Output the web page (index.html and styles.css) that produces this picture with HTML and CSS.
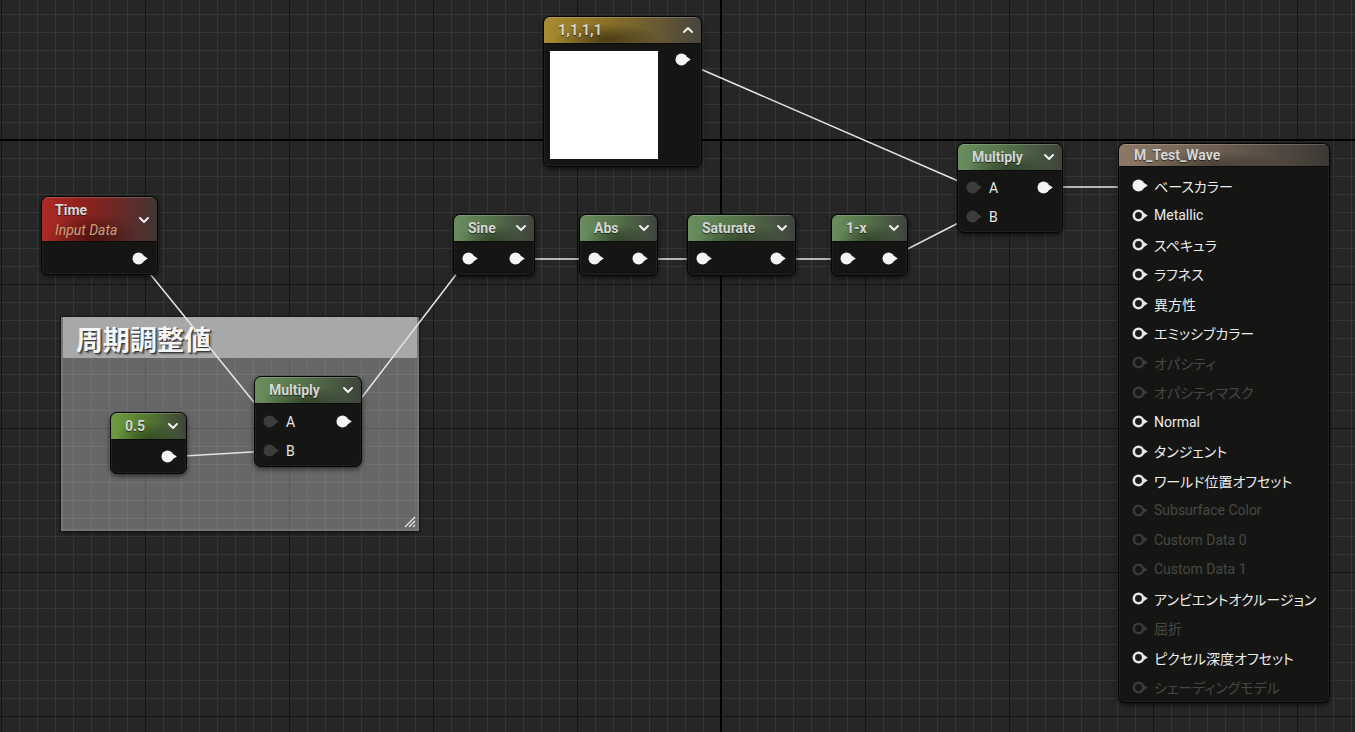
FILE: index.html
```html
<!DOCTYPE html>
<html lang="ja">
<head>
<meta charset="utf-8">
<title>M_Test_Wave</title>
<link rel="stylesheet" href="styles.css">
</head>
<body>
<svg class="defs" aria-hidden="true">
  <symbol id="pf" viewBox="0 0 17 13"><circle cx="6.5" cy="6.5" r="6" fill="#f4f4f4"/><path d="M11.8 3.8 L15.8 6.5 L11.8 9.2Z" fill="#f4f4f4"/></symbol>
  <symbol id="pr" viewBox="0 0 17 13"><circle cx="6.5" cy="6.5" r="4.7" fill="#1b1c1a" stroke="#e6e6e6" stroke-width="2.6"/><path d="M12 4 L15.8 6.5 L12 9Z" fill="#e6e6e6"/></symbol>
  <symbol id="pd" viewBox="0 0 17 13"><circle cx="6.5" cy="6.5" r="4.7" fill="#161715" stroke="#3a3b39" stroke-width="2.6"/><path d="M12 4 L15.8 6.5 L12 9Z" fill="#3a3b39"/></symbol>
  <symbol id="pg" viewBox="0 0 17 13"><circle cx="6.5" cy="6.5" r="6" fill="#3c3d3b"/><path d="M11.8 3.8 L15.8 6.5 L11.8 9.2Z" fill="#3c3d3b"/></symbol>
  <symbol id="cd" viewBox="0 0 10 6"><path d="M1 1 L5 5 L9 1" stroke="#f2f2f2" stroke-width="1.9" fill="none" stroke-linecap="round" stroke-linejoin="round"/></symbol>
  <symbol id="cu" viewBox="0 0 10 6"><path d="M1 5 L5 1 L9 5" stroke="#f2f2f2" stroke-width="1.9" fill="none" stroke-linecap="round" stroke-linejoin="round"/></symbol>
</svg>

<div class="canvas">
  <div class="comment">
    <div class="comment-title">周期調整値</div>
    <svg class="grip" viewBox="0 0 14 14"><path d="M13 3 L3 13 M13 7 L7 13 M13 11 L11 13" stroke="#e8e8e8" stroke-width="1.2"/></svg>
  </div>

  <svg class="wires" viewBox="0 0 1355 732">
    <g stroke="#e4e4e4" stroke-width="1.5" fill="none" stroke-linecap="round">
      <path d="M682 61 L972 187"/>
      <path d="M1044 187 L1138 187"/>
      <path d="M138 259 L270 422"/>
      <path d="M167 457 L270 451"/>
      <path d="M343 422 L468 259"/>
      <path d="M515 259 L594 259"/>
      <path d="M638 259 L703 259"/>
      <path d="M777 259 L847 259"/>
      <path d="M888 259 L972 216"/>
    </g>
  </svg>

  <div class="node n-color">
    <div class="hdr gold"><span class="ttl big">1,1,1,1</span><svg class="chev"><use href="#cu"/></svg></div>
    <div class="body color-body">
      <div class="swatch"></div>
      <svg class="pin pin-swatch"><use href="#pf"/></svg>
    </div>
  </div>

  <div class="node n-time">
    <div class="hdr red tall">
      <div class="ttl-stack"><span class="ttl">Time</span><span class="sub">Input Data</span></div>
      <svg class="chev"><use href="#cd"/></svg>
    </div>
    <div class="body"><div class="row"><svg class="pin out"><use href="#pf"/></svg></div></div>
  </div>

  <div class="node n-sine">
    <div class="hdr green"><span class="ttl">Sine</span><svg class="chev"><use href="#cd"/></svg></div>
    <div class="body"><div class="row"><svg class="pin"><use href="#pf"/></svg><svg class="pin out"><use href="#pf"/></svg></div></div>
  </div>

  <div class="node n-abs">
    <div class="hdr green"><span class="ttl">Abs</span><svg class="chev"><use href="#cd"/></svg></div>
    <div class="body"><div class="row"><svg class="pin"><use href="#pf"/></svg><svg class="pin out"><use href="#pf"/></svg></div></div>
  </div>

  <div class="node n-sat">
    <div class="hdr green"><span class="ttl">Saturate</span><svg class="chev"><use href="#cd"/></svg></div>
    <div class="body"><div class="row"><svg class="pin"><use href="#pf"/></svg><svg class="pin out"><use href="#pf"/></svg></div></div>
  </div>

  <div class="node n-1x">
    <div class="hdr green"><span class="ttl">1-x</span><svg class="chev"><use href="#cd"/></svg></div>
    <div class="body"><div class="row"><svg class="pin"><use href="#pf"/></svg><svg class="pin out"><use href="#pf"/></svg></div></div>
  </div>

  <div class="node n-mul1">
    <div class="hdr green"><span class="ttl">Multiply</span><svg class="chev"><use href="#cd"/></svg></div>
    <div class="body multi">
      <div class="row r29"><svg class="pin"><use href="#pg"/></svg><span class="lbl">A</span><svg class="pin out"><use href="#pf"/></svg></div>
      <div class="row r29"><svg class="pin"><use href="#pg"/></svg><span class="lbl">B</span></div>
    </div>
  </div>

  <div class="node n-mul2">
    <div class="hdr green"><span class="ttl">Multiply</span><svg class="chev"><use href="#cd"/></svg></div>
    <div class="body multi m2">
      <div class="row r29"><svg class="pin"><use href="#pg"/></svg><span class="lbl">A</span><svg class="pin out"><use href="#pf"/></svg></div>
      <div class="row r29"><svg class="pin"><use href="#pg"/></svg><span class="lbl">B</span></div>
    </div>
  </div>

  <div class="node n-half">
    <div class="hdr lime"><span class="ttl">0.5</span><svg class="chev"><use href="#cd"/></svg></div>
    <div class="body"><div class="row"><svg class="pin out"><use href="#pf"/></svg></div></div>
  </div>

  <div class="node n-res">
    <div class="hdr tan short"><span class="ttl">M_Test_Wave</span></div>
    <div class="body res-body">
      <div class="rrow"><svg class="pin"><use href="#pf"/></svg><span class="rl">ベースカラー</span></div>
      <div class="rrow"><svg class="pin"><use href="#pr"/></svg><span class="rl">Metallic</span></div>
      <div class="rrow"><svg class="pin"><use href="#pr"/></svg><span class="rl">スペキュラ</span></div>
      <div class="rrow"><svg class="pin"><use href="#pr"/></svg><span class="rl">ラフネス</span></div>
      <div class="rrow"><svg class="pin"><use href="#pr"/></svg><span class="rl">異方性</span></div>
      <div class="rrow"><svg class="pin"><use href="#pr"/></svg><span class="rl">エミッシブカラー</span></div>
      <div class="rrow off"><svg class="pin"><use href="#pd"/></svg><span class="rl">オパシティ</span></div>
      <div class="rrow off"><svg class="pin"><use href="#pd"/></svg><span class="rl">オパシティマスク</span></div>
      <div class="rrow"><svg class="pin"><use href="#pr"/></svg><span class="rl">Normal</span></div>
      <div class="rrow"><svg class="pin"><use href="#pr"/></svg><span class="rl">タンジェント</span></div>
      <div class="rrow"><svg class="pin"><use href="#pr"/></svg><span class="rl">ワールド位置オフセット</span></div>
      <div class="rrow off"><svg class="pin"><use href="#pd"/></svg><span class="rl">Subsurface Color</span></div>
      <div class="rrow off"><svg class="pin"><use href="#pd"/></svg><span class="rl">Custom Data 0</span></div>
      <div class="rrow off"><svg class="pin"><use href="#pd"/></svg><span class="rl">Custom Data 1</span></div>
      <div class="rrow"><svg class="pin"><use href="#pr"/></svg><span class="rl">アンビエントオクルージョン</span></div>
      <div class="rrow off"><svg class="pin"><use href="#pd"/></svg><span class="rl">屈折</span></div>
      <div class="rrow"><svg class="pin"><use href="#pr"/></svg><span class="rl">ピクセル深度オフセット</span></div>
      <div class="rrow off"><svg class="pin"><use href="#pd"/></svg><span class="rl">シェーディングモデル</span></div>
    </div>
  </div>
</div>
</body>
</html>
```

FILE: styles.css
```css
* { box-sizing: border-box; }

html, body {
  margin: 0;
  padding: 0;
  background: #262626;
  overflow: hidden;
}

.defs { position: absolute; width: 0; height: 0; overflow: hidden; }

.canvas {
  position: relative;
  width: 1355px;
  height: 732px;
  overflow: hidden;
  font-family: Roboto, "Noto Sans CJK JP", sans-serif;
  background-color: #262626;
  background-image:
    linear-gradient(90deg, transparent 720px, #000 720px, #000 722px, transparent 722px),
    linear-gradient(180deg, transparent 139px, #000 139px, #000 141px, transparent 141px),
    linear-gradient(90deg, #141414 1px, transparent 1px),
    linear-gradient(180deg, #141414 1px, transparent 1px),
    linear-gradient(90deg, #363636 1px, transparent 1px),
    linear-gradient(180deg, #363636 1px, transparent 1px);
  background-size:
    100% 100%,
    100% 100%,
    144px 100%,
    100% 144px,
    18px 100%,
    100% 18px;
  background-position:
    0 0,
    0 0,
    1px 0,
    0 140px,
    1px 0,
    0 14px;
  background-repeat: no-repeat, no-repeat, repeat, repeat, repeat, repeat;
}

/* comment box */
.comment {
  position: absolute;
  left: 61px;
  top: 317px;
  width: 358px;
  height: 214px;
  background: rgba(255, 255, 255, 0.3);
  border: 2px solid rgba(120, 120, 120, 0.9);
  box-shadow: 0 0 0 1px rgba(20, 20, 20, 0.7), 0 2px 4px rgba(0, 0, 0, 0.5);
  z-index: 1;
}
.comment-title {
  height: 41px;
  margin-top: -2px;
  background: #a8a8a8;
  color: #f6f6f6;
  font-family: "Noto Sans CJK JP", sans-serif;
  font-weight: 700;
  font-size: 27px;
  line-height: 43px;
  padding-left: 13px;
  text-shadow: 1px 1px 0 #3a3a3a, 2px 2px 2px rgba(0, 0, 0, 0.45);
}
.grip {
  position: absolute;
  right: 1px;
  bottom: 1px;
  width: 14px;
  height: 14px;
}

.wires {
  position: absolute;
  left: 0;
  top: 0;
  width: 1355px;
  height: 732px;
  z-index: 2;
}

/* nodes */
.node {
  position: absolute;
  z-index: 3;
  display: flex;
  flex-direction: column;
  background: #151613;
  border: 1px solid #050505;
  border-radius: 7px;
  overflow: hidden;
  box-shadow: 0 2px 5px rgba(0, 0, 0, 0.6), inset 0 0 0 1px rgba(255, 255, 255, 0.05);
}

.hdr {
  flex: none;
  height: 27px;
  display: flex;
  align-items: center;
  padding: 0 8px 0 14px;
  border-bottom: 1px solid #0b0b0b;
  box-shadow: inset 0 1px 0 rgba(255, 255, 255, 0.18);
}
.hdr.tall { height: 45px; padding-left: 13px; padding-top: 1px; }
.hdr.short { height: 23px; padding-left: 15px; }

.ttl {
  font-weight: 700;
  font-size: 14px;
  color: #d6d6d6;
  text-shadow: 0 1px 1px rgba(0, 0, 0, 0.6);
  white-space: nowrap;
}
.ttl.big { font-size: 14.5px; }
.ttl-stack {
  display: flex;
  flex-direction: column;
  line-height: 20px;
}
.sub {
  font-style: italic;
  font-size: 14px;
  color: #c4a27c;
}

.chev {
  width: 10px;
  height: 6px;
  margin-left: auto;
  flex: none;
}

.green {
  background:
    radial-gradient(ellipse 55% 80% at 48% 95%, rgba(0, 0, 0, 0.38), transparent 75%),
    linear-gradient(90deg, #6b8e5e 0%, #55744a 45%, #3f433d 100%);
}
.lime {
  background:
    radial-gradient(ellipse 55% 80% at 48% 95%, rgba(0, 0, 0, 0.35), transparent 75%),
    linear-gradient(90deg, #6e9b3f 0%, #557c31 45%, #3e443a 100%);
}
.red {
  background:
    radial-gradient(ellipse 55% 70% at 45% 90%, rgba(0, 0, 0, 0.45), transparent 75%),
    linear-gradient(90deg, #ad2a25 0%, #8a211d 40%, #403534 100%);
}
.gold {
  background:
    radial-gradient(ellipse 45% 80% at 40% 85%, rgba(0, 0, 0, 0.45), transparent 75%),
    linear-gradient(90deg, #a88b30 0%, #8a7026 40%, #48453e 100%);
}
.tan {
  background:
    radial-gradient(ellipse 50% 80% at 45% 95%, rgba(0, 0, 0, 0.3), transparent 75%),
    linear-gradient(90deg, #8c7866 0%, #6e6052 45%, #3c3834 100%);
}

.body {
  flex: 1;
  display: flex;
  flex-direction: column;
}
.row {
  flex: 1;
  display: flex;
  align-items: center;
  padding: 0 8px;
}
.row.r29 { flex: none; height: 29px; }
.body.multi { padding-top: 2px; }
.body.m2 { padding-top: 3px; }

.pin {
  width: 17px;
  height: 13px;
  flex: none;
  display: block;
}
.pin.out { margin-left: auto; }

.lbl {
  margin-left: 6px;
  font-size: 14px;
  color: #e8e8e8;
}

.color-body {
  flex-direction: row;
  align-items: flex-start;
  padding: 7px 0 0 6px;
}
.swatch {
  width: 108px;
  height: 108px;
  background: #ffffff;
  flex: none;
}
.pin-swatch {
  margin-left: 17px;
  margin-top: 2px;
}

.res-body { padding: 4px 0 0 13px; }
.rrow {
  height: 29.5px;
  display: flex;
  align-items: center;
  flex: none;
}
.rl {
  margin-left: 5px;
  font-size: 14px;
  color: #ececec;
  white-space: nowrap;
  font-feature-settings: "palt" 1;
}
.rrow.off .rl { color: #474846; }

/* node placement on the graph canvas */
.n-color { left: 543px; top: 16px; width: 159px; height: 151px; }
.n-time { left: 41px; top: 196px; width: 117px; height: 79px; }
.n-sine { left: 453px; top: 214px; width: 82px; height: 62px; }
.n-abs { left: 579px; top: 214px; width: 79px; height: 62px; }
.n-sat { left: 687px; top: 214px; width: 109px; height: 62px; }
.n-1x { left: 831px; top: 214px; width: 77px; height: 62px; }
.n-mul1 { left: 957px; top: 143px; width: 106px; height: 90px; }
.n-mul2 { left: 254px; top: 376px; width: 108px; height: 91px; }
.n-half { left: 110px; top: 412px; width: 77px; height: 62px; }
.n-res { left: 1118px; top: 143px; width: 212px; height: 560px; }
```
